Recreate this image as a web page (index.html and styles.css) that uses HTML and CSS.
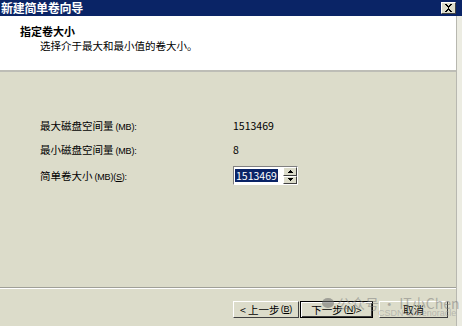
FILE: index.html
```html
<!DOCTYPE html>
<html lang="zh-CN">
<head>
<meta charset="utf-8">
<title>新建简单卷向导</title>
<link rel="stylesheet" href="styles.css">
</head>
<body>
<div class="window">
  <div class="titlebar">
    <span class="title">新建简单卷向导</span>
    <span class="close">
      <svg width="9" height="8" viewBox="0 0 9 8"><path d="M1 0h2v1h1v1h1V1h1V0h2v1H7v1H6v1H5v2h1v1h1v1h1v1H6V7H5V6H4v1H3v1H1V7h1V6h1V5h1V3H3V2H2V1H1z" fill="#000"/></svg>
    </span>
  </div>
  <div class="frame">
    <div class="main">
      <div class="header">
        <div class="h-title">指定卷大小</div>
        <div class="h-sub">选择介于最大和最小值的卷大小。</div>
      </div>
      <div class="sep"></div>
      <div class="body">
        <div class="row r1"><span class="label">最大磁盘空间量<span class="lat">(MB):</span></span><span class="value">1513469</span></div>
        <div class="row r2"><span class="label">最小磁盘空间量<span class="lat">(MB):</span></span><span class="value">8</span></div>
        <div class="row r3"><span class="label">简单卷大小<span class="lat">(MB)(<u>S</u>):</span></span>
          <span class="spin">
            <span class="spin-input"><span class="sel">1513469</span></span>
            <span class="spin-btns">
              <span class="sb"><svg width="5" height="3" viewBox="0 0 5 3"><path d="M2 0h1v1h1v1h1v1H0V2h1V1h1z" fill="#000"/></svg></span>
              <span class="sb"><svg width="5" height="3" viewBox="0 0 5 3"><path d="M0 0h5v1H4v1H3v1H2V2H1V1H0z" fill="#000"/></svg></span>
            </span>
          </span>
        </div>
      </div>
      <div class="sep2"></div>
      <div class="footer">
        <span class="btn back">&lt; 上一步<span class="lat">(<u>B</u>)</span></span>
        <span class="btn next">下一步<span class="lat">(<u>N</u>)</span> &gt;</span>
        <span class="btn cancel">取消</span>
      </div>
    </div>
    <div class="edge"></div>
  </div>
  <div class="watermark">
    <span class="wm1"><span class="wm-icon"></span>公众号 · IT小Chen</span>
    <span class="wm2">CSDN @wenoracle</span>
  </div>
</div>
</body>
</html>
```
FILE: styles.css
```css
html, body {
  margin: 0;
  padding: 0;
}
body {
  width: 462px;
  height: 326px;
  overflow: hidden;
  font-family: "Noto Sans CJK SC", "Liberation Sans", sans-serif;
  font-size: 11px;
  color: #000;
  background: #dcdcca;
}
.window {
  position: relative;
  width: 462px;
  height: 326px;
  display: flex;
  flex-direction: column;
}
.titlebar {
  height: 16px;
  background: #0a2466;
  display: flex;
  align-items: center;
  justify-content: space-between;
  padding: 0 6px 0 1px;
}
.title {
  color: #fff;
  font-weight: bold;
  font-size: 12px;
  line-height: 14px;
  letter-spacing: -0.3px;
}
.close {
  width: 15px;
  height: 12px;
  box-sizing: border-box;
  background: #dcdcca;
  border: 1px solid;
  border-color: #fff #404040 #404040 #fff;
  display: flex;
  align-items: center;
  justify-content: center;
}
.frame {
  flex: 1;
  display: flex;
}
.main {
  width: 456px;
  display: flex;
  flex-direction: column;
}
.edge {
  flex: 1;
  background: linear-gradient(to right, #b8b8b0 0 1px, #ecece2 1px);
}
.header {
  height: 54px;
  background: #fff;
  box-sizing: border-box;
  padding: 9px 0 0 20px;
}
.h-title {
  font-weight: bold;
  font-size: 11px;
  line-height: 13px;
}
.h-sub {
  padding-left: 20px;
  font-size: 10.5px;
  line-height: 13px;
  margin-top: 1px;
}
.sep {
  height: 2px;
  background: #bdbdb6;
}
.body {
  flex: 1;
  box-sizing: border-box;
  padding: 41px 0 0 40px;
  display: flex;
  flex-direction: column;
}
.row {
  display: flex;
  align-items: center;
  height: 24px;
}
.r3 {
  height: 29px;
}
.label {
  width: 193px;
  font-size: 10.5px;
}
.lat {
  font-family: "Liberation Sans", sans-serif;
  font-size: 9px;
  letter-spacing: -0.2px;
  margin-left: 2px;
}
.value {
  font-size: 10.5px;
}
.spin {
  display: flex;
  height: 19px;
  box-sizing: border-box;
  border: 1px solid;
  border-color: #808080 #fff #fff #808080;
  background: #fff;
}
.spin-input {
  width: 48px;
  display: flex;
  align-items: center;
  padding-left: 1px;
}
.sel {
  background: #0a2466;
  color: #fff;
  font-size: 10.5px;
  line-height: 13px;
  padding: 0 1px;
}
.spin-btns {
  display: flex;
  flex-direction: column;
  width: 14px;
}
.sb {
  flex: 1;
  box-sizing: border-box;
  background: #dcdcca;
  border: 1px solid;
  border-color: #fff #404040 #404040 #fff;
  display: flex;
  align-items: center;
  justify-content: center;
}
.sep2 {
  height: 2px;
  background: linear-gradient(#a0a098 0 1px, #fff 1px);
}
.footer {
  height: 37px;
  box-sizing: border-box;
  padding: 12px 8px 0 0;
  display: flex;
  justify-content: flex-end;
  align-items: flex-start;
}
.btn {
  height: 17px;
  box-sizing: border-box;
  border: 1px solid;
  border-color: #fff #404040 #404040 #fff;
  background: #dcdcca;
  display: flex;
  align-items: center;
  justify-content: center;
  font-size: 10.5px;
  line-height: 13px;
}
.btn .lat {
  margin-left: 1px;
}
.back {
  width: 66px;
}
.next {
  width: 73px;
  margin-left: 1px;
  border: 1px solid #000;
  box-shadow: inset 1px 1px 0 #fff, inset -1px -1px 0 #404040;
}
.cancel {
  width: 69px;
  margin-left: 6px;
}
.watermark {
  position: absolute;
  left: 322px;
  top: 294px;
  pointer-events: none;
}
.wm1 {
  position: absolute;
  left: 0;
  top: 0;
  white-space: nowrap;
  font-size: 14px;
  line-height: 18px;
  color: rgba(120, 120, 120, 0.5);
  display: flex;
  align-items: center;
  gap: 3px;
}
.wm-icon {
  width: 12px;
  height: 10px;
  border-radius: 50%;
  background: rgba(110, 110, 110, 0.55);
}
.wm2 {
  position: absolute;
  left: 56px;
  top: 14px;
  white-space: nowrap;
  font-family: "Liberation Sans", sans-serif;
  font-size: 9px;
  line-height: 10px;
  color: rgba(150, 150, 150, 0.55);
}
```
